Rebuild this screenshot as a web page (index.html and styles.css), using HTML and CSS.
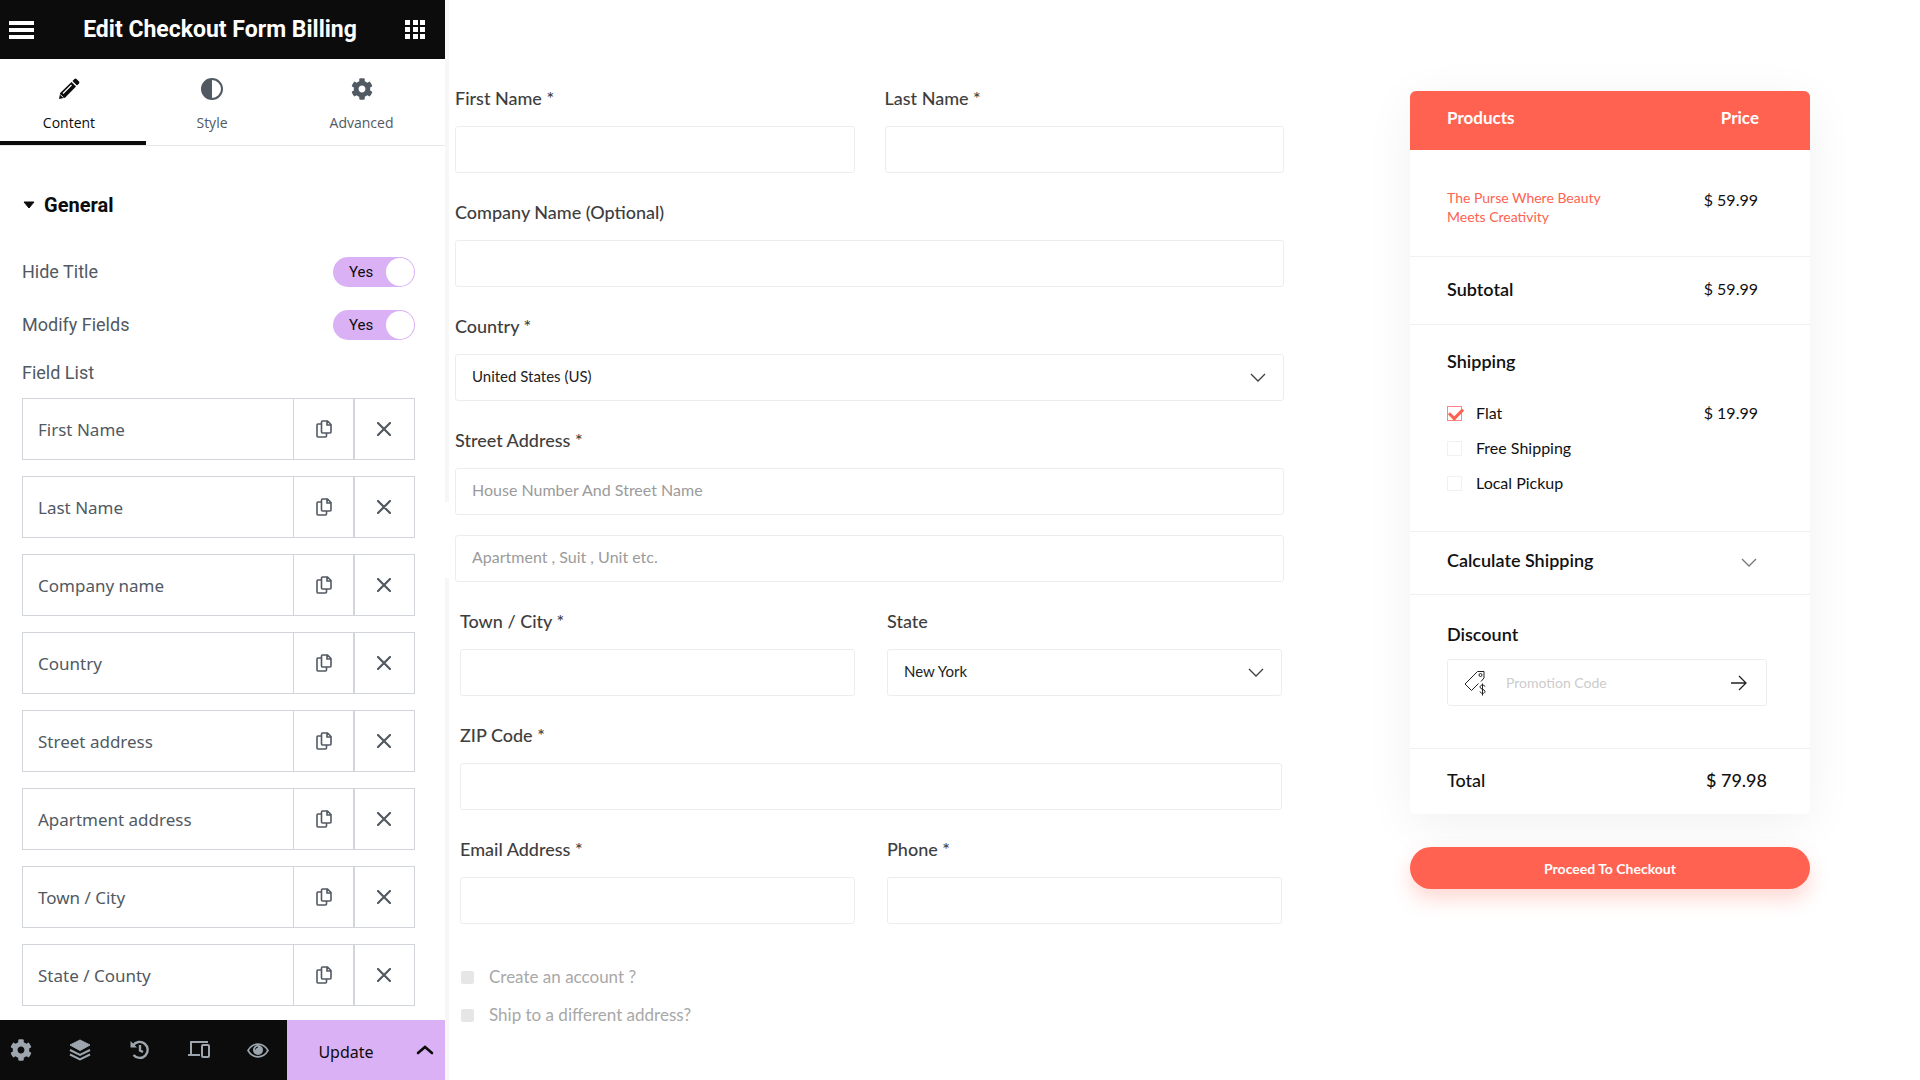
FILE: index.html
```
<!DOCTYPE html>
<html lang="en">
<head>
    <meta charset="UTF-8">
    <meta name="viewport" content="width=device-width, initial-scale=1.0">
    <title>Edit Checkout Form Billing</title>
    <link rel="stylesheet" href="styles.css">
</head>
<body>
    <!-- shared icons -->
    <svg class="sprite" aria-hidden="true">
        <symbol id="i-copy" viewBox="0 0 16 18">
            <path d="M6.500 1h5l3.500 3.500V12a1 1 0 0 1-1 1H6.500a1 1 0 0 1-1-1V2a1 1 0 0 1 1-1zM11 1v4h4M5.500 4H2a1 1 0 0 0-1 1v11a1 1 0 0 0 1 1h7.500a1 1 0 0 0 1-1v-3" fill="none" stroke="currentColor" stroke-width="1.600"/>
        </symbol>
        <symbol id="i-close" viewBox="0 0 14 14">
            <path d="M1 1l12 12M13 1L1 13" fill="none" stroke="currentColor" stroke-width="2.200" stroke-linecap="round"/>
        </symbol>
        <symbol id="i-gear" viewBox="0 0 512 512">
            <path d="M487.400 315.700l-42.600-24.600c4.300-23.200 4.300-47 0-70.200l42.600-24.600c4.900-2.800 7.100-8.600 5.500-14-11.100-35.600-30-67.800-54.700-94.600-3.800-4.100-10-5.100-14.800-2.300L380.800 110c-17.900-15.400-38.500-27.300-60.800-35.100V25.800c0-5.600-3.900-10.500-9.400-11.700-36.700-8.200-74.300-7.800-109.200 0-5.500 1.200-9.400 6.100-9.400 11.700V75c-22.200 7.900-42.800 19.800-60.800 35.100L88.700 85.500c-4.900-2.800-11-1.900-14.800 2.300-24.700 26.700-43.600 58.900-54.700 94.600-1.700 5.400.6 11.200 5.500 14L67.300 221c-4.300 23.200-4.300 47 0 70.200l-42.600 24.600c-4.900 2.800-7.100 8.600-5.500 14 11.100 35.600 30 67.800 54.700 94.600 3.800 4.100 10 5.100 14.800 2.300l42.600-24.600c17.900 15.400 38.500 27.300 60.800 35.100v49.200c0 5.600 3.900 10.500 9.400 11.700 36.700 8.200 74.300 7.800 109.200 0 5.500-1.200 9.400-6.100 9.400-11.700v-49.200c22.200-7.900 42.800-19.800 60.800-35.100l42.600 24.600c4.900 2.800 11 1.900 14.800-2.300 24.700-26.700 43.600-58.900 54.700-94.600 1.500-5.500-.7-11.300-5.600-14.100zM256 336c-44.100 0-80-35.900-80-80s35.900-80 80-80 80 35.900 80 80-35.900 80-80 80z" fill="currentColor"/>
        </symbol>
        <symbol id="i-down" viewBox="0 0 16 10">
            <path d="M1 1l7 7 7-7" fill="none" stroke="currentColor" stroke-width="1.300"/>
        </symbol>
    </svg>

    <div class="app">
        <aside class="panel">
            <header class="panel-header">
                <button type="button" aria-label="Menu">
                    <svg width="26" height="18" viewBox="0 0 26 18"><path d="M0 2h25M0 9h25M0 16h25" stroke="#fff" stroke-width="4"/></svg>
                </button>
                <h1>Edit Checkout Form Billing</h1>
                <button type="button" aria-label="Widgets">
                    <svg width="20" height="20" viewBox="0 0 20 20" fill="#fff"><path d="M0 0h5v5H0zM8 0h5v5H8zM15 0h5v5h-5zM0 7h5v5H0zM8 7h5v5H8zM15 7h5v5h-5zM0 14h5v5H0zM8 14h5v5H8zM15 14h5v5h-5z"/></svg>
                </button>
            </header>

            <nav class="tabs">
                <button type="button" class="tab active">
                    <svg width="22" height="22" viewBox="0 0 22 22"><path d="M1 21l1.200-6L13.500 4l4.500 4.500L7 19.800z" fill="currentColor"/><path d="M14.500 3l2-2q1-.8 2 0l2.500 2.500q.8 1 0 2l-2 2z" fill="currentColor"/><path d="M5 15.500l8.500-8.500" stroke="#fff" stroke-width="1.200"/><path d="M2.300 16.500l3 3" stroke="#fff" stroke-width="1"/></svg>
                    <span>Content</span>
                </button>
                <button type="button" class="tab">
                    <svg width="22" height="22" viewBox="0 0 22 22"><circle cx="11" cy="11" r="10" fill="none" stroke="currentColor" stroke-width="2"/><path d="M11 1a10 10 0 0 0 0 20z" fill="currentColor"/></svg>
                    <span>Style</span>
                </button>
                <button type="button" class="tab">
                    <svg width="22" height="22"><use href="#i-gear"/></svg>
                    <span>Advanced</span>
                </button>
            </nav>

            <div class="controls">
                <h2><svg width="12" height="8" viewBox="0 0 12 8"><path d="M1 1h10L6 7z" fill="currentColor" stroke="currentColor" stroke-linejoin="round"/></svg>General</h2>

                <div class="control">
                    <label for="hide-title">Hide Title</label>
                    <div class="switch"><input type="checkbox" id="hide-title" checked><span>Yes</span></div>
                </div>
                <div class="control">
                    <label for="modify-fields">Modify Fields</label>
                    <div class="switch"><input type="checkbox" id="modify-fields" checked><span>Yes</span></div>
                </div>

                <h3>Field List</h3>
                <ul class="field-list">
                    <li>
                        <button type="button" class="field-name">First Name</button>
                        <button type="button" class="field-copy" aria-label="Duplicate"><svg width="16" height="18"><use href="#i-copy"/></svg></button>
                        <button type="button" class="field-remove" aria-label="Remove"><svg width="14" height="14"><use href="#i-close"/></svg></button>
                    </li>
                    <li>
                        <button type="button" class="field-name">Last Name</button>
                        <button type="button" class="field-copy" aria-label="Duplicate"><svg width="16" height="18"><use href="#i-copy"/></svg></button>
                        <button type="button" class="field-remove" aria-label="Remove"><svg width="14" height="14"><use href="#i-close"/></svg></button>
                    </li>
                    <li>
                        <button type="button" class="field-name">Company name</button>
                        <button type="button" class="field-copy" aria-label="Duplicate"><svg width="16" height="18"><use href="#i-copy"/></svg></button>
                        <button type="button" class="field-remove" aria-label="Remove"><svg width="14" height="14"><use href="#i-close"/></svg></button>
                    </li>
                    <li>
                        <button type="button" class="field-name">Country</button>
                        <button type="button" class="field-copy" aria-label="Duplicate"><svg width="16" height="18"><use href="#i-copy"/></svg></button>
                        <button type="button" class="field-remove" aria-label="Remove"><svg width="14" height="14"><use href="#i-close"/></svg></button>
                    </li>
                    <li>
                        <button type="button" class="field-name">Street address</button>
                        <button type="button" class="field-copy" aria-label="Duplicate"><svg width="16" height="18"><use href="#i-copy"/></svg></button>
                        <button type="button" class="field-remove" aria-label="Remove"><svg width="14" height="14"><use href="#i-close"/></svg></button>
                    </li>
                    <li>
                        <button type="button" class="field-name">Apartment address</button>
                        <button type="button" class="field-copy" aria-label="Duplicate"><svg width="16" height="18"><use href="#i-copy"/></svg></button>
                        <button type="button" class="field-remove" aria-label="Remove"><svg width="14" height="14"><use href="#i-close"/></svg></button>
                    </li>
                    <li>
                        <button type="button" class="field-name">Town / City</button>
                        <button type="button" class="field-copy" aria-label="Duplicate"><svg width="16" height="18"><use href="#i-copy"/></svg></button>
                        <button type="button" class="field-remove" aria-label="Remove"><svg width="14" height="14"><use href="#i-close"/></svg></button>
                    </li>
                    <li>
                        <button type="button" class="field-name">State / County</button>
                        <button type="button" class="field-copy" aria-label="Duplicate"><svg width="16" height="18"><use href="#i-copy"/></svg></button>
                        <button type="button" class="field-remove" aria-label="Remove"><svg width="14" height="14"><use href="#i-close"/></svg></button>
                    </li>
                </ul>
            </div>

            <footer class="panel-footer">
                <div class="tools">
                    <button type="button" aria-label="Settings"><svg width="22" height="22"><use href="#i-gear"/></svg></button>
                    <button type="button" aria-label="Navigator"><svg width="22" height="22" viewBox="0 0 22 22"><path d="M11 1l10 5-10 5.500L1 6z" fill="currentColor" stroke="currentColor" stroke-linejoin="round"/><path d="M1 11l10 5 10-5M1 15.500l10 5 10-5" fill="none" stroke="currentColor" stroke-width="2"/></svg></button>
                    <button type="button" aria-label="History"><svg width="22" height="22" viewBox="0 0 22 22"><path d="M4 6.500A8 8 0 1 1 4.500 16M11 6v5.500l3 1.500" fill="none" stroke="currentColor" stroke-width="2.400"/><path d="M1.500 2v6.500H8z" fill="currentColor"/></svg></button>
                    <button type="button" aria-label="Responsive mode"><svg width="22" height="22" viewBox="0 0 22 22"><path d="M3 15V3h17M0 16h12" fill="none" stroke="currentColor" stroke-width="2"/><rect x="14" y="6" width="7" height="12" rx="1" fill="none" stroke="currentColor" stroke-width="2"/></svg></button>
                    <button type="button" aria-label="Preview"><svg width="22" height="22" viewBox="0 0 22 22"><path d="M1 11.500C6 3 16 3 21 11.500 16 20 6 20 1 11.500z" fill="none" stroke="currentColor" stroke-width="1.600"/><circle cx="11" cy="11" r="5" fill="currentColor"/><path d="M8.500 10.500a2.500 2.500 0 0 1 2.500-2.500" fill="none" stroke="#0c0c0c"/></svg></button>
                </div>
                <button type="button" class="update">Update</button>
                <button type="button" class="update-more" aria-label="Save options"><svg width="18" height="10" viewBox="0 0 18 10"><path d="M2 8l7-6 7 6" fill="none" stroke="currentColor" stroke-width="2.600" stroke-linecap="round"/></svg></button>
            </footer>
            <button type="button" class="panel-toggle" aria-label="Hide panel"></button>
        </aside>

        <main class="checkout">
            <form class="billing">
                <div class="fields">
                    <div class="field">
                        <label for="first-name">First Name *</label>
                        <input type="text" id="first-name">
                    </div>
                    <div class="field">
                        <label for="last-name">Last Name *</label>
                        <input type="text" id="last-name">
                    </div>
                    <div class="field wide">
                        <label for="company">Company Name (Optional)</label>
                        <input type="text" id="company">
                    </div>
                    <div class="field wide">
                        <label for="country">Country *</label>
                        <div class="select">
                            <select id="country"><option>United States (US)</option></select>
                            <svg width="16" height="10"><use href="#i-down"/></svg>
                        </div>
                    </div>
                    <div class="field wide">
                        <label for="street">Street Address *</label>
                        <input type="text" id="street" placeholder="House Number And Street Name">
                        <input type="text" placeholder="Apartment , Suit , Unit etc." aria-label="Apartment">
                    </div>
                </div>

                <div class="fields inset">
                    <div class="field">
                        <label for="city">Town / City *</label>
                        <input type="text" id="city">
                    </div>
                    <div class="field">
                        <label for="state">State</label>
                        <div class="select">
                            <select id="state"><option>New York</option></select>
                            <svg width="16" height="10"><use href="#i-down"/></svg>
                        </div>
                    </div>
                    <div class="field wide">
                        <label for="zip">ZIP Code *</label>
                        <input type="text" id="zip">
                    </div>
                    <div class="field">
                        <label for="email">Email Address *</label>
                        <input type="email" id="email">
                    </div>
                    <div class="field">
                        <label for="phone">Phone *</label>
                        <input type="tel" id="phone">
                    </div>
                </div>

                <div class="extras">
                    <label><input type="checkbox">Create an account ?</label>
                    <label><input type="checkbox">Ship to a different address?</label>
                </div>
            </form>

            <aside class="summary">
                <div class="card">
                    <table>
                        <thead>
                            <tr><th>Products</th><th class="price">Price</th></tr>
                        </thead>
                        <tbody>
                            <tr class="product">
                                <td><a href="#">The Purse Where Beauty<br>Meets Creativity</a></td>
                                <td class="price">$ 59.99</td>
                            </tr>
                            <tr class="subtotal">
                                <th>Subtotal</th>
                                <td class="price">$ 59.99</td>
                            </tr>
                        </tbody>
                    </table>

                    <section class="shipping">
                        <h2>Shipping</h2>
                        <div class="option">
                            <label><input type="checkbox" checked>Flat</label>
                            <span>$ 19.99</span>
                        </div>
                        <div class="option">
                            <label><input type="checkbox">Free Shipping</label>
                        </div>
                        <div class="option">
                            <label><input type="checkbox">Local Pickup</label>
                        </div>
                    </section>

                    <button type="button" class="calculate">
                        Calculate Shipping
                        <svg width="16" height="10"><use href="#i-down"/></svg>
                    </button>

                    <section class="discount">
                        <h2><label for="promo">Discount</label></h2>
                        <div class="promo">
                            <svg width="24" height="26" viewBox="0 0 24 26" fill="none" stroke="#222"><path d="M1 14L13.500 1.500H20V8l-3 3.500M1 14l6.500 6.500 7-7"/><circle cx="16.500" cy="5" r="1.500"/><path d="M21 16.500c-.5-2-5-2-5 .5s5 2 5 4.500-4.500 2.500-5 0M18.500 13.500v12"/></svg>
                            <input type="text" id="promo" placeholder="Promotion Code">
                            <button type="button" aria-label="Apply"><svg width="16" height="16" viewBox="0 0 16 16"><path d="M0 8h15M8 1l7 7-7 7" fill="none" stroke="#222" stroke-width="1.300"/></svg></button>
                        </div>
                    </section>

                    <div class="total"><span>Total</span><span>$ 79.98</span></div>
                </div>
                <button type="submit" class="proceed">Proceed To Checkout</button>
            </aside>
        </main>
    </div>
</body>
</html>
```
FILE: styles.css
```
* {
    box-sizing: border-box;
}
body {
    margin: 0;
    background-color: #fff;
    font-family: Lato, sans-serif;
}
button, input, select {
    font: inherit;
    color: inherit;
    margin: 0;
}
button {
    padding: 0;
    border: 0;
    background: none;
    cursor: pointer;
}
svg {
    display: block;
}
h1, h2, h3 {
    margin: 0;
}
.sprite {
    position: absolute;
    width: 0;
    height: 0;
}
.app {
    display: flex;
    min-height: 100vh;
}

/* editor panel */
.panel {
    position: sticky;
    top: 0;
    display: flex;
    flex-direction: column;
    flex-shrink: 0;
    width: 449px;
    height: 100vh;
    border-right: 4px solid #f7f7f7;
    color: #515962;
    font-family: Roboto, sans-serif;
}
.panel-header {
    display: flex;
    align-items: center;
    justify-content: space-between;
    height: 59px;
    padding: 0 20px 0 9px;
    background-color: #0c0c0c;
    color: #fff;
}
.panel-header h1 {
    font-size: 23px;
    font-weight: 700;
}
.tabs {
    display: grid;
    grid-template-columns: 146px 140px 1fr;
    height: 87px;
    border-bottom: 1px solid #e6e8ea;
}
.tab {
    display: flex;
    flex-direction: column;
    align-items: center;
    gap: 13px;
    padding: 19px 8px 0 0;
    font-family: "Open Sans", sans-serif;
    font-size: 14px;
    line-height: 20px;
}
.tab.active {
    color: #0c0c0c;
    border-bottom: 4px solid #0c0c0c;
}
.controls {
    flex: 1;
    min-height: 0;
    padding: 47px 30px 0 22px;
    overflow: hidden;
}
.controls h2 {
    display: flex;
    align-items: center;
    gap: 9px;
    margin: 0 0 40px 1px;
    color: #0c0c0c;
    font-size: 20px;
    line-height: 24px;
}
.control {
    display: flex;
    align-items: center;
    justify-content: space-between;
    height: 30px;
    margin-bottom: 23px;
    font-size: 18px;
}
.control label {
    padding-bottom: 2px;
}
.switch {
    position: relative;
    height: 30px;
}
.switch input {
    appearance: none;
    width: 82px;
    height: 30px;
    border-radius: 15px;
    background-color: #dbb1f5;
}
.switch input::after {
    content: '';
    display: block;
    width: 28px;
    height: 28px;
    margin: 1px 1px 1px auto;
    border-radius: 50%;
    background-color: #fff;
}
.switch span {
    position: absolute;
    left: 16px;
    top: 0;
    color: #0c0c0c;
    font-size: 15px;
    line-height: 31px;
    pointer-events: none;
}
.controls h3 {
    margin-bottom: 15px;
    font-size: 18px;
    font-weight: 400;
    line-height: 20px;
}
.field-list {
    display: flex;
    flex-direction: column;
    gap: 16px;
    margin: 0;
    padding: 0;
    list-style: none;
}
.field-list li {
    display: flex;
    height: 62px;
    border: 1px solid #d2d6db;
}
.field-list button {
    display: flex;
    align-items: center;
    justify-content: center;
}
.field-list .field-name {
    flex: 1;
    justify-content: flex-start;
    padding-left: 15px;
    font-family: "Noto Sans", sans-serif;
    font-size: 17px;
}
.field-copy {
    width: 60px;
    border-left: 1px solid #d2d6db;
}
.field-list .field-remove {
    width: 61px;
    padding-right: 2px;
    border-left: 2px solid #d2d6db;
}
.panel-footer {
    display: flex;
    height: 60px;
    background-color: #dbb1f5;
    color: #0c0c0c;
}
.tools {
    display: flex;
    align-items: center;
    justify-content: space-between;
    width: 287px;
    padding: 0 18px 0 10px;
    background-color: #0c0c0c;
    color: #9da5ae;
}
.update {
    flex: 1;
    padding-top: 3px;
    font-family: "Noto Sans", sans-serif;
    font-size: 16px;
}
.update-more {
    display: flex;
    align-items: center;
    justify-content: center;
    width: 40px;
}
.panel-toggle {
    position: absolute;
    left: 445px;
    top: calc(50% - 38px);
    width: 4px;
    height: 76px;
    background-color: #fff;
}

/* checkout page */
.checkout {
    display: grid;
    grid-template-columns: 1fr 400px;
    align-items: start;
    gap: 126px;
    flex: 1;
    padding: 86px 110px 20px 6px;
}
.fields {
    display: grid;
    grid-template-columns: 1fr 1fr;
    gap: 27px 30px;
    margin-bottom: 27px;
}
.fields.inset {
    column-gap: 32px;
    padding: 0 2px 0 5px;
    margin-bottom: 41px;
}
.field {
    display: flex;
    flex-direction: column;
    color: #3e3e3e;
}
.wide {
    grid-column: 1 / -1;
}
.field label {
    margin-bottom: 16px;
    font-size: 18px;
    font-weight: 500;
    line-height: 24px;
}
.field input, .select select {
    width: 100%;
    height: 47px;
    padding: 0 16px 4px;
    border: 1px solid #ededed;
    border-radius: 3px;
    background-color: #fff;
    font-size: 16px;
}
.field input + input {
    margin-top: 20px;
}
.field input::placeholder {
    color: #9b9b9b;
    opacity: 1;
}
.select {
    position: relative;
}
.select select {
    appearance: none;
    display: block;
    color: #222;
    font-size: 15px;
}
.select svg {
    position: absolute;
    right: 18px;
    top: 19px;
    pointer-events: none;
}
.extras {
    display: flex;
    flex-direction: column;
    gap: 14px;
    padding-left: 6px;
}
.extras label {
    display: flex;
    align-items: center;
    gap: 15px;
    color: #a8a8a8;
    font-size: 17px;
    line-height: 24px;
}
.extras input {
    appearance: none;
    width: 13px;
    height: 13px;
    border-radius: 2px;
    background-color: #e6e6e6;
    box-shadow: 0 0 40px rgba(0, 0, 0, 0.05);
}

/* order summary */
.summary {
    padding-top: 5px;
}
.card {
    border-radius: 6px;
    background-color: #fff;
    box-shadow: 0 10px 50px rgba(0, 0, 0, 0.06);
    color: #111;
    overflow: hidden;
}
.card table {
    width: 100%;
    border-collapse: separate;
    border-spacing: 0;
}
.card th, .card td {
    vertical-align: top;
    padding: 20px 52px 23px 37px;
    border-bottom: 1px solid #f1f1f1;
    font-size: 16px;
    line-height: 24px;
    text-align: left;
}
.card th {
    font-size: 18px;
    font-weight: 600;
}
.card thead th {
    padding: 15px 51px 20px 37px;
    border: 0;
    background-color: #ff6250;
    color: #fff;
    font-size: 17px;
    font-weight: 700;
}
.card .product td {
    padding-top: 38px;
    padding-bottom: 30px;
}
.card .price {
    padding-left: 0;
    text-align: right;
}
.product a {
    display: block;
    color: #ff6250;
    font-size: 14px;
    line-height: 19px;
    text-decoration: none;
}
.card h2 {
    font-size: 18px;
    font-weight: 600;
    line-height: 24px;
}
.shipping {
    padding: 24px 52px 36px 37px;
    border-bottom: 1px solid #f1f1f1;
}
.shipping h2 {
    margin-bottom: 28px;
}
.option {
    display: flex;
    justify-content: space-between;
    margin-top: 11px;
    font-size: 16px;
    line-height: 24px;
}
.option label {
    display: flex;
    align-items: center;
    gap: 14px;
}
.option input {
    appearance: none;
    width: 15px;
    height: 15px;
    border: 1px solid #f1f1f1;
}
.option input:checked {
    border-color: #ff8585;
}
.option input:checked::after {
    content: '';
    display: block;
    width: 11px;
    height: 6px;
    margin: 1px;
    border: solid #ff6250;
    border-width: 0 0 3px 3px;
    transform: rotate(-45deg);
}
.calculate {
    display: flex;
    align-items: center;
    justify-content: space-between;
    width: 100%;
    padding: 16px 53px 22px 37px;
    border-bottom: 1px solid #f1f1f1;
    font-size: 18px;
    font-weight: 600;
    line-height: 24px;
}
.calculate svg {
    margin-top: 6px;
    color: #777;
}
.discount {
    padding: 27px 43px 42px 37px;
    border-bottom: 1px solid #f1f1f1;
}
.discount h2 {
    margin-bottom: 13px;
}
.promo {
    display: flex;
    align-items: center;
    height: 47px;
    padding: 0 19px 0 16px;
    border: 1px solid #ededed;
    border-radius: 3px;
}
.promo input {
    flex: 1;
    min-width: 0;
    padding: 0 18px;
    border: 0;
    font-size: 14px;
}
.promo input::placeholder {
    color: #ccc;
    opacity: 1;
}
.total {
    display: flex;
    justify-content: space-between;
    padding: 19px 43px 22px 37px;
    font-size: 18px;
    font-weight: 500;
    line-height: 24px;
}
.proceed {
    width: 100%;
    height: 42px;
    margin-top: 33px;
    border-radius: 21px;
    background-color: #ff6250;
    box-shadow: 0 10px 20px rgba(255, 98, 80, 0.25);
    color: #fff;
    font-size: 14px;
    font-weight: 700;
}
```
